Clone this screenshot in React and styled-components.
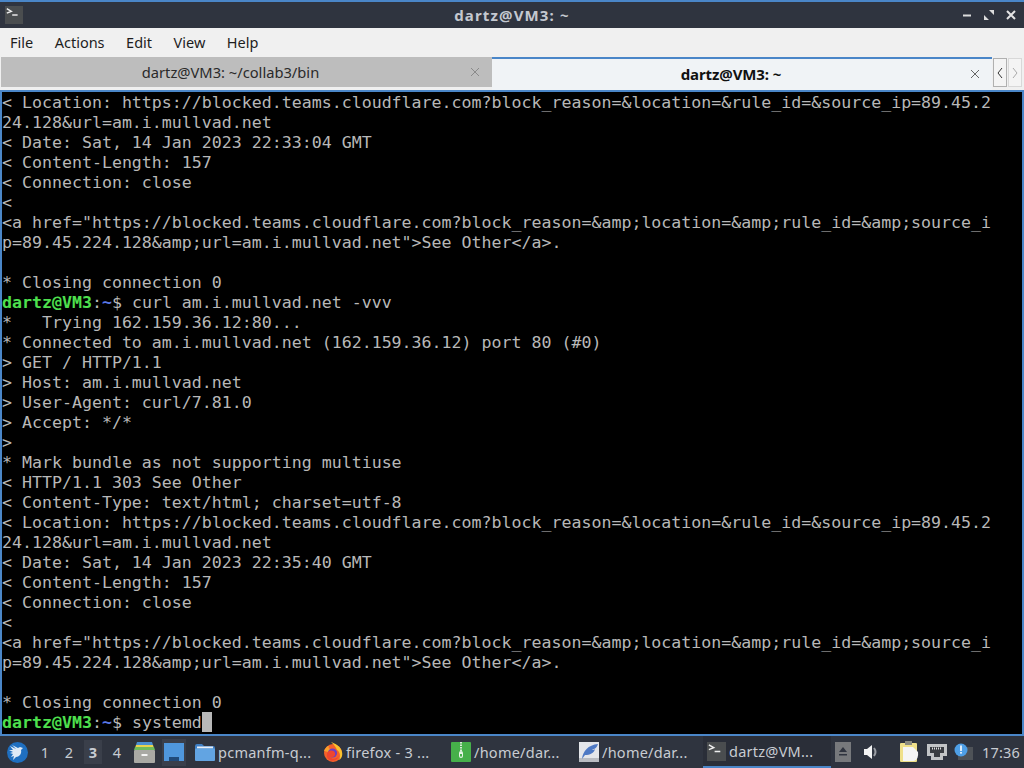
import React from "react";
import styled, { createGlobalStyle } from "styled-components";

const GlobalStyle = createGlobalStyle`
  html, body {
    margin: 0;
    padding: 0;
    width: 1024px;
    height: 768px;
    overflow: hidden;
    background: #2f343f;
  }
`;

const Screen = styled.div`
  width: 1024px;
  height: 768px;
  display: flex;
  flex-direction: column;
  font-family: "Noto Sans", "Open Sans", sans-serif;
`;

const TitleBar = styled.div`
  height: 26px;
  flex: none;
  border-top: 2px solid #4a86c8;
  background: #2f343f;
  display: flex;
  align-items: center;
  justify-content: space-between;
  padding: 0 8px 0 5px;
  position: relative;
`;

const TitleText = styled.div`
  position: absolute;
  left: 0;
  right: 0;
  text-align: center;
  font-size: 15px;
  font-weight: 700;
  letter-spacing: 1.15px;
  color: #c4c8d0;
`;

const WindowButtons = styled.div`
  display: flex;
  align-items: center;
  gap: 12px;
`;

const MenuBar = styled.div`
  height: 27px;
  flex: none;
  background: #f0f0f0;
  display: flex;
  align-items: center;
  padding: 0 0 2px 10px;
  gap: 21.5px;
`;

const MenuItem = styled.span`
  font-size: 14.5px;
  color: #1d1d1d;
`;

const TabRow = styled.div`
  height: 33px;
  flex: none;
  background: #f0f0f0;
  display: flex;
  border-bottom: 2px solid #4a86c8;
  box-sizing: content-box;
`;

const Tab = styled.div`
  width: ${p => (p.$active ? "500px" : "491px")};
  margin-left: ${p => (p.$active ? "0" : "1px")};
  box-sizing: border-box;
  display: flex;
  align-items: center;
  background: ${p => (p.$active ? "#f0f3f6" : "#bdbdbd")};
  border-top: ${p => (p.$active ? "2px solid #4a86c8" : "0")};
  margin-bottom: ${p => (p.$active ? "0" : "3px")};
  padding-bottom: ${p => (p.$active ? "2px" : "0")};
  padding-right: 12px;
`;

const TabLabel = styled.span`
  flex: 1;
  text-align: center;
  font-size: ${p => (p.$active ? "15px" : "14.7px")};
  font-weight: ${p => (p.$active ? 700 : 400)};
  color: ${p => (p.$active ? "#111" : "#2a2a2a")};
  letter-spacing: ${p => (p.$active ? "-0.1px" : "0")};
  padding-right: ${p => (p.$active ? "0" : "10px")};
`;

const ArrowButton = styled.div`
  width: 14px;
  height: 29px;
  margin-top: 1px;
  box-sizing: border-box;
  border: 1px solid ${p => (p.$dim ? "#d8d8d8" : "#b0b0b0")};
  background: #f4f4f4;
  display: flex;
  align-items: center;
  justify-content: center;
  margin-left: 1px;
`;

const Terminal = styled.div`
  height: 641px;
  flex: none;
  padding-top: 1px;
  background: #000;
  border-left: 2px solid #4a86c8;
  border-right: 2px solid #4a86c8;
  border-bottom: 2px solid #4a86c8;
  font-family: "DejaVu Sans Mono", monospace;
  font-size: 16.6px;
  line-height: 20px;
  color: #b8b8b8;
  white-space: pre;
  overflow: hidden;
`;

const Row = styled.div`
  height: 20px;
  display: flex;
`;

const PromptUser = styled.span`
  color: #4ee04e;
  font-weight: 700;
`;

const PromptPath = styled.span`
  color: #5a78e8;
  font-weight: 700;
`;

const Cursor = styled.span`
  width: 10px;
  height: 20px;
  margin-top: -1px;
  background: #b8b8b8;
`;

const TaskBar = styled.div`
  flex: 1;
  background: #2f343f;
  display: flex;
  align-items: center;
  color: #c8ccd2;
  font-size: 14.5px;
`;

const StartButton = styled.div`
  width: 33px;
  display: flex;
  justify-content: center;
  padding-left: 1px;
  box-sizing: border-box;
`;

const Desktops = styled.div`
  display: flex;
  align-items: center;
`;

const Desktop = styled.span`
  width: 18px;
  height: 24px;
  margin: 0 3px;
  display: flex;
  align-items: center;
  justify-content: center;
  font-size: 14.5px;
  font-weight: ${p => (p.$active ? 700 : 400)};
  background: ${p => (p.$active ? "#3a3f4a" : "transparent")};
`;

const QuickLaunch = styled.div`
  width: 24px;
  height: 27px;
  margin: 0 3px;
  display: flex;
  align-items: center;
  justify-content: center;
  background: ${p => (p.$active ? "#3a3f4b" : "transparent")};
`;

const TaskList = styled.div`
  display: flex;
  margin-left: 2px;
`;

const Task = styled.div`
  width: 128px;
  height: 32px;
  flex: none;
  box-sizing: border-box;
  display: flex;
  align-items: center;
  gap: 3px;
  padding-left: 4px;
  border-bottom: ${p => (p.$active ? "2px solid #4a86c8" : "0")};
  background: ${p => (p.$active ? "#2a2e38" : "transparent")};
`;

const TaskLabel = styled.span`
  white-space: nowrap;
  letter-spacing: 0.25px;
`;

const Tray = styled.div`
  display: flex;
  align-items: center;
  margin-left: 4px;
`;

const TrayItem = styled.div`
  display: flex;
  margin-left: ${p => p.$gap || 0}px;
`;

const Clock = styled.span`
  margin-left: 9px;
  letter-spacing: 0.2px;
`;

const TermIcon = ({ size = 20 }) => (
  <svg width={size} height={size} viewBox="0 0 20 20">
    <rect width="20" height="20" fill="#4a4d4f" />
    <path d="M2 3l5 3-5 2" fill="none" stroke="#eee" strokeWidth="1.6" />
    <path d="M8 10h6" stroke="#eee" strokeWidth="1.6" />
  </svg>
);

const CloseX = ({ color = "#8a8a8a" }) => (
  <svg width="10" height="10" viewBox="0 0 10 10">
    <path d="M1 1l8 8M9 1l-8 8" stroke={color} strokeWidth="1" />
  </svg>
);

const FolderIcon = () => (
  <svg width="20" height="20" viewBox="0 0 20 20">
    <path d="M0 4q0-2 2-2h5l2 2h9q2 0 2 2v12H0z" fill="#3f7fc4" />
    <rect x="2" y="4.5" width="16" height="2" fill="#e8eef5" />
    <rect y="6.5" width="20" height="12.5" rx="1" fill="#62a4e2" />
  </svg>
);

const FirefoxIcon = () => (
  <svg width="20" height="20" viewBox="0 0 20 20">
    <circle cx="10" cy="11" r="9" fill="#f5622a" />
    <path d="M8 0c3 1 10 4 11 10 1 4-1 7-3 8 2-4 1-8-2-10-1-3-3-5-6-8z" fill="#f9c22e" />
    <path d="M1 9c1-3 3-5 5-5-1 2 0 3 2 3l-3 3z" fill="#f9a02e" />
    <circle cx="9.5" cy="11" r="4.6" fill="#6b3fc4" />
    <path d="M5 10c2-2 6-2 7 1 1 3-2 5-5 4 2 3 7 2 9-1-2 6-10 6-12 1-.5-2 0-4 1-5z" fill="#f0452f" />
  </svg>
);

const ArchiveIcon = () => (
  <svg width="20" height="20" viewBox="0 0 20 20">
    <rect width="20" height="20" rx="1" fill="#46b04a" />
    <path d="M10 0v9" stroke="#d8ecd8" strokeWidth="2" strokeDasharray="1.5 1" />
    <rect x="8" y="9" width="4" height="7" rx="2" fill="#e6f3e6" />
    <rect x="9" y="12" width="2" height="2.5" fill="#46b04a" />
  </svg>
);

const FeatherIcon = () => (
  <svg width="20" height="20" viewBox="0 0 20 20">
    <rect width="20" height="20" fill="#e4e6ea" />
    <rect y="16" width="20" height="4" fill="#b9bcc2" />
    <path d="M3 17C4 9 9 3 19 2c-1 4-4 5-6 6 1 0 2 0 3-1-1 4-5 6-10 6z" fill="#4e79c4" />
  </svg>
);

const BirdLogo = () => (
  <svg width="21" height="21" viewBox="0 0 21 21">
    <circle cx="10.5" cy="10.5" r="10.5" fill="#1f6fc0" />
    <path d="M3 4l6 3-4-4 6 3 2-1 3 1-2 2c1 4-2 7-5 7l-3 3 1-4-3 1 2-3-3-1 3-1-4-2 4 0z" fill="#dfeaf6" />
  </svg>
);

const CabinetIcon = () => (
  <svg width="21" height="21" viewBox="0 0 21 21">
    <path d="M3 0h15l1 3H2z" fill="#4a8fd0" />
    <path d="M2 3h17l1 3H1z" fill="#e8d24e" />
    <path d="M1 5h19l1 3H0z" fill="#6fbb5c" />
    <rect y="8" width="21" height="13" rx="1" fill="#a9a9a4" />
    <rect x="7.5" y="12" width="6" height="2" fill="#f4f4f4" />
  </svg>
);

const DesktopIcon = () => (
  <svg width="20" height="18" viewBox="0 0 20 18">
    <rect width="20" height="18" fill="#4f97dd" />
    <rect x="5" y="14" width="10" height="4" fill="#204a7a" />
  </svg>
);

const EjectIcon = () => (
  <svg width="16" height="20" viewBox="0 0 16 20">
    <rect width="16" height="20" fill="#77797c" />
    <path d="M8 5l4 5H4z" fill="#2f343f" />
    <rect x="4" y="12" width="8" height="1.5" fill="#2f343f" />
  </svg>
);

const SpeakerIcon = () => (
  <svg width="16" height="16" viewBox="0 0 16 16">
    <path d="M0 5h3l5-4v14l-5-4H0z" fill="#f4f4f4" />
    <path d="M10 4q3 4 0 8" stroke="#9a9da3" strokeWidth="2" fill="none" />
  </svg>
);

const ClipboardIcon = () => (
  <svg width="20" height="22" viewBox="0 0 20 22">
    <rect x="0" y="2" width="17" height="19" rx="1" fill="#efe08a" />
    <rect x="5" y="0" width="7" height="4" fill="#8a8a80" />
    <path d="M3 6h10l5 5q1 7-4 9H3z" fill="#f5f5f5" />
  </svg>
);

const NetworkIcon = () => (
  <svg width="20" height="17" viewBox="0 0 20 17">
    <path d="M1.5 1.5h17v9h-4v4h-9v-4h-4z" fill="#3a3d42" stroke="#c2c4c6" strokeWidth="3" />
    <path d="M5 4.5h10" stroke="#e0e0e0" strokeWidth="2" strokeDasharray="1 1" />
  </svg>
);

const AlertIcon = () => (
  <svg width="19" height="18" viewBox="0 0 19 18">
    <rect x="4" y="4" width="15" height="13" fill="#4e5257" />
    <circle cx="7" cy="7" r="6.5" fill="#4e9fe6" />
    <rect x="6.2" y="2.5" width="1.6" height="5.5" fill="#fff" />
    <rect x="6.2" y="9" width="1.6" height="1.6" fill="#fff" />
  </svg>
);

const block = (date) => [
  "< Location: https://blocked.teams.cloudflare.com?block_reason=&location=&rule_id=&source_ip=89.45.2",
  "24.128&url=am.i.mullvad.net",
  `< Date: Sat, 14 Jan 2023 ${date} GMT`,
  "< Content-Length: 157",
  "< Connection: close",
  "<",
  '<a href="https://blocked.teams.cloudflare.com?block_reason=&amp;location=&amp;rule_id=&amp;source_i',
  'p=89.45.224.128&amp;url=am.i.mullvad.net">See Other</a>.',
  "",
  "* Closing connection 0",
];

const sessionLines = [
  "*   Trying 162.159.36.12:80...",
  "* Connected to am.i.mullvad.net (162.159.36.12) port 80 (#0)",
  "> GET / HTTP/1.1",
  "> Host: am.i.mullvad.net",
  "> User-Agent: curl/7.81.0",
  "> Accept: */*",
  ">",
  "* Mark bundle as not supporting multiuse",
  "< HTTP/1.1 303 See Other",
  "< Content-Type: text/html; charset=utf-8",
];

const Prompt = ({ command, cursor }) => (
  <Row>
    <PromptUser>dartz@VM3</PromptUser>:<PromptPath>~</PromptPath>$ {command}
    {cursor && <Cursor />}
  </Row>
);

const tasks = [
  { icon: <FolderIcon />, label: "pcmanfm-q..." },
  { icon: <FirefoxIcon />, label: "firefox - 3 ..." },
  { icon: <ArchiveIcon />, label: "/home/dar..." },
  { icon: <FeatherIcon />, label: "/home/dar..." },
  { icon: <TermIcon size={19} />, label: "dartz@VM...", active: true },
];

export default function App() {
  return (
    <Screen>
      <GlobalStyle />
      <TitleBar>
        <TermIcon size={18} />
        <TitleText>dartz@VM3: ~</TitleText>
        <WindowButtons>
          <svg width="9" height="9" viewBox="0 0 9 9"><path d="M0 4.5h8" stroke="#dcdcdc" strokeWidth="2" /></svg>
          <svg width="10" height="10" viewBox="0 0 10 10"><path d="M5 0h5v5zM0 10V5l5 5z" fill="#dcdcdc" /></svg>
          <svg width="10" height="10" viewBox="0 0 10 10"><path d="M1 1l8 8M9 1l-8 8" stroke="#e4e4e4" strokeWidth="2" /></svg>
        </WindowButtons>
      </TitleBar>
      <MenuBar>
        {["File", "Actions", "Edit", "View", "Help"].map(item => (
          <MenuItem key={item}>{item}</MenuItem>
        ))}
      </MenuBar>
      <TabRow>
        <Tab>
          <TabLabel>dartz@VM3: ~/collab3/bin</TabLabel>
          <CloseX />
        </Tab>
        <Tab $active>
          <TabLabel $active>dartz@VM3: ~</TabLabel>
          <CloseX color="#666" />
        </Tab>
        <ArrowButton>
          <svg width="6" height="12" viewBox="0 0 6 12"><path d="M5 1L1 6l4 5" stroke="#333" fill="none" /></svg>
        </ArrowButton>
        <ArrowButton $dim>
          <svg width="6" height="12" viewBox="0 0 6 12"><path d="M1 1l4 5-4 5" stroke="#aaa" fill="none" /></svg>
        </ArrowButton>
      </TabRow>
      <Terminal>
        {block("22:33:04").map((line, i) => <Row key={i}>{line}</Row>)}
        <Prompt command="curl am.i.mullvad.net -vvv" />
        {sessionLines.map((line, i) => <Row key={i}>{line}</Row>)}
        {block("22:35:40").map((line, i) => <Row key={i}>{line}</Row>)}
        <Prompt command="systemd" cursor />
      </Terminal>
      <TaskBar>
        <StartButton><BirdLogo /></StartButton>
        <Desktops>
          {[1, 2, 3, 4].map(n => (
            <Desktop key={n} $active={n === 3}>{n}</Desktop>
          ))}
        </Desktops>
        <QuickLaunch><CabinetIcon /></QuickLaunch>
        <QuickLaunch $active><DesktopIcon /></QuickLaunch>
        <TaskList>
          {tasks.map((task, i) => (
            <Task key={i} $active={task.active}>
              {task.icon}
              <TaskLabel>{task.label}</TaskLabel>
            </Task>
          ))}
        </TaskList>
        <Tray>
          <TrayItem><EjectIcon /></TrayItem>
          <TrayItem $gap={13}><SpeakerIcon /></TrayItem>
          <TrayItem $gap={20}><ClipboardIcon /></TrayItem>
          <TrayItem $gap={7}><NetworkIcon /></TrayItem>
          <TrayItem $gap={7}><AlertIcon /></TrayItem>
        </Tray>
        <Clock>17:36</Clock>
      </TaskBar>
    </Screen>
  );
}
